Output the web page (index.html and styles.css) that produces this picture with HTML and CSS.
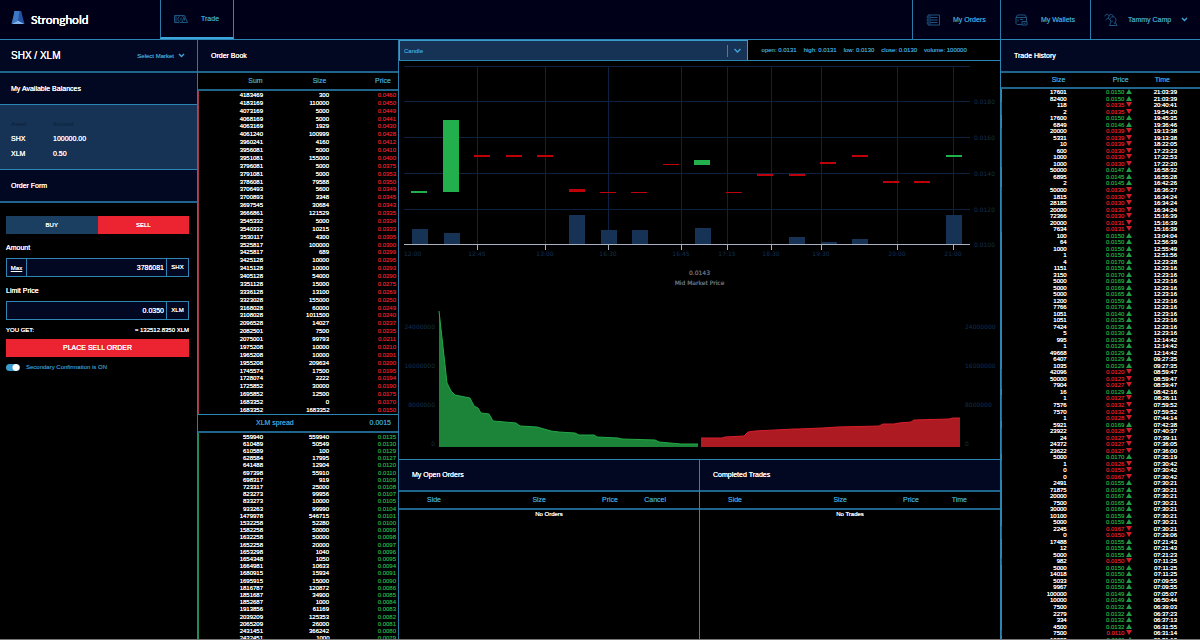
FILE: index.html
```html
<!DOCTYPE html>
<html lang="en">
<head>
    <meta charset="UTF-8">
    <title>Stronghold</title>
    <link rel="stylesheet" href="styles.css">
</head>
<body>

    <!-- top bar -->
    <header class="topbar">
        <a class="logo" href="#">
            <svg width="14" height="14" viewBox="0 0 14 14">
                <path d="M3.600 0h6.400l1.400 9H2.400z" fill="#4a90d8"/>
                <path d="M3.600 0L.5 13 7 9.500 9 0z" fill="#3d78c4"/>
                <path d="M10 0l3.500 13L7 9.500 8.500 0z" fill="#2350a0"/>
                <path d="M.5 13L7 9.500l6.500 3.500z" fill="#7db4f0"/>
            </svg>
            <span>Stronghold</span>
        </a>
        <nav class="nav">
            <a class="nav-link trade active" href="#">
                <svg width="14" height="10" viewBox="0 0 14 10">
                    <path d="M5 1.500H.5v7H5M2 1.500v7M9 2.500A3 3.500 0 1 0 9 7.500M7 3.500v3M10.500 1.500l-2.500 7h5.500zM10.500 4v2.500M5 1.500h5"/>
                </svg>
                <span>Trade</span>
            </a>
            <a class="nav-link orders" href="#">
                <svg width="14" height="12" viewBox="0 0 14 12">
                    <path d="M2 1h11.500v10H2zM.5 3h2M.5 6h2M.5 9h2M4.500 3.500h7M4.500 6h7M4.500 8.500h7M4 1v10"/>
                </svg>
                <span>My Orders</span>
            </a>
            <a class="nav-link wallets" href="#">
                <svg width="13" height="12" viewBox="0 0 13 12">
                    <path d="M1 3.500h10.500v4M1 3.500v6l1 1h5M1 3.500L2.500 1H10l1.500 2.500M3 5.500v2M5 5.500h3M7 7.500h5v3.500H7zM8.500 9.200h2"/>
                </svg>
                <span>My Wallets</span>
            </a>
            <a class="nav-link user" href="#">
                <svg width="14" height="14" viewBox="0 0 14 14">
                    <path d="M1 3.500a2 2 0 1 1 3 1.500L1.500 7M5 3a2 2 0 1 1 4 1M6 6.500a3 3 0 1 1 5 2.500L13 12.500H5.500L7 9zM8 7.500v1.500M10 9.500l1 1.500M4 5l2 2"/>
                </svg>
                <span>Tammy Camp</span>
                <svg class="arrow" width="7" height="5" viewBox="0 0 7 5"><path d="M1 1l2.500 2.500L6 1"/></svg>
            </a>
        </nav>
    </header>

    <main class="layout">

        <!-- left column -->
        <section class="account">
            <div class="title market">
                <h1>SHX / XLM</h1>
                <a class="select-market" href="#">Select Market
                    <svg class="arrow" width="7" height="5" viewBox="0 0 7 5"><path d="M1 1l2.500 2.500L6 1"/></svg>
                </a>
            </div>
            <h2 class="title balances-title">My Available Balances</h2>
            <div class="balances">
                <table>
                    <thead>
                        <tr><th>Asset</th><th>Amount</th></tr>
                    </thead>
                    <tbody>
                        <tr><td>SHX</td><td>100000.00</td></tr>
                        <tr><td>XLM</td><td>0.50</td></tr>
                    </tbody>
                </table>
            </div>
            <h2 class="title">Order Form</h2>
            <form class="order-form" action="#">
                <div class="side">
                    <button type="button" class="buy">BUY</button>
                    <button type="button" class="sell">SELL</button>
                </div>
                <label for="amount">Amount</label>
                <div class="field">
                    <button type="button" class="max">Max</button>
                    <input id="amount" type="text" value="3786081">
                    <span class="unit">SHX</span>
                </div>
                <label for="price">Limit Price</label>
                <div class="field">
                    <input id="price" type="text" value="0.0350">
                    <span class="unit">XLM</span>
                </div>
                <div class="total">
                    <span>YOU GET:</span>
                    <span>≈ 132512.8350 XLM</span>
                </div>
                <button type="submit" class="place">PLACE SELL ORDER</button>
                <div class="confirm">
                    <input id="confirm" type="checkbox" checked>
                    <label for="confirm">Secondary Confirmation is ON</label>
                </div>
            </form>
        </section>

        <!-- order book -->
        <section class="book">
            <h2 class="title">Order Book</h2>
            <table class="head">
                <thead><tr><th>Sum</th><th>Size</th><th>Price</th></tr></thead>
            </table>
            <table class="rows asks"><tbody id="asks"></tbody></table>
            <div class="spread"><span>XLM spread</span><span>0.0015</span></div>
            <table class="rows bids"><tbody id="bids"></tbody></table>
        </section>

        <!-- charts -->
        <section class="center">
            <div class="chart-bar">
                <div class="select-box">
                    <select aria-label="Chart type">
                        <option>Candle</option>
                        <option>Line</option>
                    </select>
                    <span class="bar"></span>
                    <svg class="arrow" width="9" height="6" viewBox="0 0 9 6"><path d="M1.500 1l3 3 3-3"/></svg>
                </div>
                <div class="ohlc">
                    <span>open: 0.0131</span>
                    <span>high: 0.0131</span>
                    <span>low: 0.0130</span>
                    <span>close: 0.0130</span>
                    <span>volume: 100000</span>
                </div>
            </div>
            <svg class="chart" id="candles" viewBox="0 0 601 205"></svg>
            <div class="mid">
                <p>0.0143</p>
                <p>Mid Market Price</p>
            </div>
            <svg class="chart" id="depth" viewBox="0 0 601 170"></svg>

            <div class="history">
                <div class="panel">
                    <h2 class="title">My Open Orders</h2>
                    <table class="head">
                        <thead><tr><th>Side</th><th>Size</th><th>Price</th><th>Cancel</th><th></th></tr></thead>
                    </table>
                    <p class="empty">No Orders</p>
                </div>
                <div class="panel">
                    <h2 class="title">Completed Trades</h2>
                    <table class="head">
                        <thead><tr><th>Side</th><th>Size</th><th>Price</th><th>Time</th><th></th></tr></thead>
                    </table>
                    <p class="empty">No Trades</p>
                </div>
            </div>
        </section>

        <!-- trade history -->
        <section class="trades">
            <h2 class="title">Trade History</h2>
            <table class="head">
                <thead><tr><th>Size</th><th>Price</th><th>Time</th></tr></thead>
            </table>
            <table class="rows"><tbody id="trades"></tbody></table>
        </section>
    </main>

    <script src="script.js"></script>
</body>
</html>
```

FILE: styles.css
```css
/* reset */
body, h1, h2, p, table, form, input, button, select {
    margin: 0;
    padding: 0;
}
* {
    box-sizing: border-box;
}
a {
    color: inherit;
    text-decoration: none;
}
table {
    width: 100%;
    border-collapse: collapse;
    table-layout: fixed;
}
th, td {
    padding: 0;
    font-weight: normal;
}
button, input, select {
    border: 0;
    border-radius: 0;
    outline: none;
    background: none;
    color: inherit;
    font: inherit;
    text-shadow: inherit;
}
h1, h2 {
    font-size: 7px;
    font-weight: normal;
}
body {
    display: flex;
    flex-direction: column;
    height: 100vh;
    overflow: hidden;
    border-bottom: 1px solid #777;
    background-color: #000;
    color: #fff;
    font: 7px/8px "Liberation Sans", Arial, sans-serif;
    text-shadow: 0 0 0 currentColor;
}
.arrow {
    fill: none;
    stroke: #3fa5d8;
    stroke-width: 1.4;
}

/* top bar */
.topbar {
    display: flex;
    flex: none;
    height: 40px;
    border-bottom: 1px solid #2a86b4;
    background-color: #000018;
}
.logo {
    display: flex;
    align-items: center;
    gap: 6px;
    width: 160px;
    padding: 0 0 3px 11px;
    font: 12px/14px Lato, sans-serif;
    text-shadow: 0 0 0 #fff, 0 0 0 #fff;
}
.logo span {
    padding-top: 3px;
}
.nav {
    display: flex;
    flex: 1;
    color: #3a9ccb;
}
.nav-link {
    display: flex;
    align-items: center;
    height: 39px;
    border-left: 1px solid #2a7ba8;
}
.nav-link svg:first-child {
    fill: none;
    stroke: #1c537c;
    stroke-width: 1;
}
.trade {
    width: 74px;
    margin-right: auto;
    padding-left: 13px;
    gap: 13px;
    border-right: 1px solid #2a86b4;
    border-bottom: 2px solid #3ea6dc;
}
.orders {
    width: 88px;
    padding-left: 13px;
    gap: 13px;
}
.wallets {
    width: 90px;
    padding-left: 14px;
    gap: 13px;
}
.user {
    width: 110px;
    padding-left: 13px;
    gap: 10px;
}

/* layout */
.layout {
    display: grid;
    grid-template-columns: 198px 201px 1fr 200px;
    flex: 1;
    min-height: 0;
}
.layout > section {
    min-width: 0;
    overflow: hidden;
}
.title {
    display: flex;
    align-items: center;
    height: 33px;
    padding-left: 11px;
    border-bottom: 2px solid #20658c;
    background-color: #030822;
}
.head {
    height: 18px;
    border-bottom: 2px solid #20658c;
    color: #3a9ccb;
}
.head th {
    padding-right: 5px;
    text-align: right;
}
.rows {
    font-size: 6px;
    line-height: 6px;
    text-align: right;
}
.up {
    color: #1f9e45;
}
.down {
    color: #d01c28;
}

/* account */
.account {
    border-right: 1px solid #2a7ba8;
}
.market {
    justify-content: space-between;
    padding-right: 12px;
}
.market h1 {
    font-size: 10px;
}
.select-market {
    display: flex;
    align-items: center;
    gap: 4px;
    color: #3a9ccb;
    font-size: 6px;
}
.balances-title {
    height: 32px;
    border-bottom: 1px solid #2a86b4;
}
.balances {
    height: 65px;
    padding: 11px;
    border-bottom: 1px solid #2a86b4;
    background-color: #163254;
}
.balances tr {
    height: 15px;
    text-align: left;
}
.balances th {
    height: 13px;
    color: #0b1f38;
    font-size: 6px;
    text-shadow: none;
}
.balances th:first-child {
    width: 42px;
}
.order-form {
    padding: 13px 8px 0 6px;
}
.side {
    display: flex;
    height: 18px;
    font-size: 6px;
}
.side button {
    flex: 1;
    cursor: pointer;
}
.side .buy {
    background-color: #1a3f60;
}
.side .sell, .place {
    background-color: #ec2330;
}
.order-form > label {
    display: block;
    height: 8px;
    margin-top: 10px;
}
.field {
    display: flex;
    height: 19px;
    margin: 6px 0;
    border: 1px solid #2f86b5;
    background-color: #030822;
}
.field input {
    flex: 1;
    min-width: 0;
    padding-right: 2px;
    text-align: right;
}
.field .max {
    width: 20px;
    border-right: 1px solid #2f86b5;
    font-size: 6px;
    text-decoration: underline;
}
.field .unit {
    width: 22px;
    border-left: 1px solid #2f86b5;
    font-size: 6px;
    line-height: 17px;
    text-align: center;
}
.total {
    display: flex;
    justify-content: space-between;
    margin-bottom: 5px;
    font-size: 6px;
}
.place {
    width: 100%;
    height: 18px;
    cursor: pointer;
}
.confirm {
    display: flex;
    align-items: center;
    gap: 6px;
    margin-top: 6px;
    color: #2f86b5;
    font-size: 6px;
}
.confirm input {
    width: 14px;
    height: 7px;
    border-radius: 4px;
    appearance: none;
    background: radial-gradient(circle at 10px 50%, #fff 3px, #3a9ccb 4px);
}

/* order book */
.book {
    border-right: 1px solid #2a7ba8;
}
.book .title {
    padding-left: 13px;
}
.book .head th:first-child {
    padding-right: 2px;
}
.book .head th:last-child {
    padding-right: 7px;
}
.book .rows {
    border-left: 1px solid #a03848;
}
.book td {
    padding-right: 2px;
}
.book .asks {
    height: 323px;
}
.book .bids {
    height: 209px;
    border-left-color: #1f8a60;
}
.spread {
    display: flex;
    align-items: center;
    justify-content: space-between;
    height: 19px;
    padding: 0 7px 0 58px;
    border-top: 1px solid #2a86b4;
    border-bottom: 2px solid #20658c;
    color: #3a9ccb;
}

/* charts */
.center {
    display: flex;
    flex-direction: column;
}
.chart-bar {
    display: flex;
    flex: none;
    height: 21px;
    border-bottom: 1px solid #2a86b4;
    color: #3a9ccb;
    font-size: 6px;
}
.select-box {
    display: flex;
    align-items: center;
    width: 58%;
    padding-right: 5px;
    border: 1px solid #3a9ccb;
    border-bottom: 0;
    background-color: #163254;
}
.select-box select {
    flex: 1;
    padding-left: 4px;
    appearance: none;
}
.select-box .bar {
    width: 1px;
    height: 12px;
    margin-right: 5px;
    background-color: #2f86b5;
}
.ohlc {
    display: flex;
    align-items: center;
    gap: 7px;
    padding-left: 14px;
}
.chart {
    display: block;
    flex: none;
    width: 100%;
    text-shadow: none;
}
.chart text {
    fill: #12304f;
    font: 6px "DejaVu Sans", sans-serif;
}
.grid {
    stroke: #0c2240;
}
.axis {
    stroke: #aab0c0;
}
.volume {
    fill: #163254;
}
.rise {
    fill: #22b04c;
}
.fall {
    fill: #c00008;
}
.bid-area {
    fill: #1c8438;
}
.ask-area {
    fill: #ae1a22;
}
.bid-line {
    fill: none;
    stroke: #22a848;
}
.ask-line {
    fill: none;
    stroke: #d81e2c;
}
.mid {
    height: 23px;
    padding-top: 2px;
    color: #66707c;
    font: 6px/10px "DejaVu Sans", sans-serif;
    text-align: center;
}
.history {
    display: flex;
    flex: 1;
    border-top: 1px solid #2a86b4;
}
.panel {
    flex: 1;
}
.panel:first-child {
    border-right: 1px solid #2a86b4;
}
.panel .title {
    height: 32px;
    padding-left: 13px;
}
.panel th {
    padding: 0;
}
.panel th:nth-child(1) {
    width: 14%;
}
.panel th:nth-child(2) {
    width: 35%;
}
.panel th:nth-child(3) {
    width: 24%;
}
.panel th:nth-child(4) {
    width: 16%;
}
.empty {
    font-size: 6px;
    text-align: center;
}

/* trade history */
.trades {
    border-left: 1px solid #2a86b4;
}
.trades .title {
    padding-left: 13px;
}
.trades .head {
    height: 16px;
}
.trades .head th:first-child {
    padding-right: 2px;
}
.trades .head th:last-child {
    padding-right: 30px;
}
.trades .rows {
    height: 554px;
}
.trades td {
    padding-right: 1px;
}
.trades td:first-child {
    border-left: 1px solid #24909c;
}
.trades .sold td:first-child {
    border-left-color: #a03848;
}
.trades td:last-child {
    padding-right: 23px;
}
.trades td svg {
    display: inline-block;
    width: 6px;
    height: 5px;
    margin-left: 2px;
    fill: currentColor;
}
```

FILE: script.js
```js
/* order book: sum size price */
var asks = '4183469 300 0.0460,4183169 110000 0.0450,4073169 5000 0.0449,4068169 5000 0.0441,4063169 1929 0.0430,' +
    '4061240 100999 0.0428,3960241 4160 0.0412,3956081 5000 0.0410,3951081 155000 0.0400,3796081 5000 0.0375,' +
    '3791081 5000 0.0353,3786081 79588 0.0350,3706493 5600 0.0349,3700893 3348 0.0345,3697545 30684 0.0343,' +
    '3666861 121529 0.0335,3545332 5000 0.0334,3540332 10215 0.0333,3530117 4300 0.0305,3525817 100000 0.0300,' +
    '3425817 689 0.0299,3425128 10000 0.0295,3415128 10000 0.0293,3405128 54000 0.0290,3351128 15000 0.0275,' +
    '3336128 13100 0.0269,3323028 155000 0.0250,3168028 60000 0.0249,3108028 1011500 0.0240,2096528 14027 0.0237,' +
    '2082501 7500 0.0235,2075001 99793 0.0211,1975208 10000 0.0210,1965208 10000 0.0201,1955208 209634 0.0200,' +
    '1745574 17500 0.0195,1728074 2222 0.0194,1725852 30000 0.0190,1695852 12500 0.0175,1683352 0 0.0170,' +
    '1683352 1683352 0.0150';
var bids = '559940 559940 0.0135,610489 50549 0.0130,610589 100 0.0129,628584 17995 0.0127,641488 12904 0.0120,' +
    '697398 55910 0.0110,698317 919 0.0109,723317 25000 0.0108,823273 99956 0.0107,833273 10000 0.0105,' +
    '933263 99990 0.0104,1479978 546715 0.0101,1532258 52280 0.0100,1582258 50000 0.0099,1632258 50000 0.0098,' +
    '1652258 20000 0.0097,1653298 1040 0.0096,1654348 1050 0.0095,1664981 10633 0.0094,1680915 15934 0.0091,' +
    '1695915 15000 0.0090,1816787 120872 0.0086,1851687 34900 0.0085,1852687 1000 0.0084,1913856 61169 0.0083,' +
    '2039209 125353 0.0082,2065209 26000 0.0081,2431451 366242 0.0080,2432451 1000 0.0079';

/* trades: size price direction time */
var trades = '17601 0.0150 + 21:03:39,82400 0.0150 + 21:03:39,118 0.0135 - 20:40:41,2 0.0135 - 19:54:20,' +
    '17600 0.0150 + 19:45:35,6849 0.0146 + 19:36:46,20000 0.0139 - 19:13:38,5331 0.0139 - 19:13:38,' +
    '10 0.0139 - 18:22:05,600 0.0130 - 17:23:23,1000 0.0130 - 17:22:53,1000 0.0130 - 17:22:20,' +
    '50000 0.0147 + 16:58:32,6895 0.0145 + 16:55:28,2 0.0145 + 16:42:26,50000 0.0130 - 16:36:27,' +
    '1815 0.0130 - 16:34:24,28185 0.0130 - 16:34:24,20000 0.0130 - 16:34:24,72366 0.0130 - 15:16:39,' +
    '20000 0.0131 - 15:16:39,7634 0.0131 - 15:16:39,100 0.0150 + 13:04:04,64 0.0150 + 12:56:39,' +
    '1000 0.0150 + 12:55:49,1 0.0150 + 12:51:56,4 0.0170 + 12:23:28,1151 0.0150 + 12:23:16,' +
    '3150 0.0170 + 12:23:16,5000 0.0169 + 12:23:16,5000 0.0169 + 12:23:16,5000 0.0165 + 12:23:16,' +
    '1200 0.0159 + 12:23:16,7766 0.0170 + 12:23:16,1051 0.0140 + 12:23:16,1051 0.0135 + 12:23:16,' +
    '7424 0.0135 + 12:23:16,5 0.0130 + 12:23:16,995 0.0130 + 12:14:42,1 0.0129 + 12:14:42,' +
    '49668 0.0129 + 12:14:42,6407 0.0129 + 09:27:35,1035 0.0129 + 09:27:35,42096 0.0120 - 08:59:47,' +
    '50000 0.0123 - 08:59:47,7904 0.0127 - 08:59:47,16 0.0129 + 08:42:16,1 0.0127 - 08:26:11,' +
    '7576 0.0132 - 07:59:52,7570 0.0132 - 07:59:52,1 0.0128 - 07:44:14,5921 0.0169 + 07:42:38,' +
    '23922 0.0128 - 07:40:37,24 0.0127 - 07:39:11,24372 0.0127 - 07:36:05,23622 0.0127 - 07:36:00,' +
    '5000 0.0170 + 07:35:19,1 0.0126 - 07:30:42,0 0.0150 - 07:30:42,0 0.0167 - 07:30:42,' +
    '2491 0.0155 + 07:30:21,71875 0.0167 + 07:30:21,20000 0.0167 + 07:30:21,7500 0.0165 + 07:30:21,' +
    '30000 0.0160 + 07:30:21,10100 0.0159 + 07:30:21,5000 0.0159 + 07:30:21,2245 0.0167 - 07:30:21,' +
    '0 0.0150 - 07:29:06,17488 0.0155 + 07:21:43,12 0.0155 + 07:21:43,5000 0.0155 + 07:21:23,' +
    '982 0.0150 - 07:11:25,5000 0.0150 + 07:11:25,14018 0.0150 + 07:11:25,5033 0.0150 + 07:09:55,' +
    '9967 0.0150 + 07:09:55,100000 0.0149 + 07:05:07,10000 0.0149 + 06:50:44,7500 0.0132 + 06:39:03,' +
    '2279 0.0132 + 06:37:23,334 0.0132 + 06:37:13,4500 0.0132 + 06:31:55,7500 0.0110 - 06:31:14,' +
    '10000 0.0131 + 06:31:10';

function bookRows(data, cls) {
    return data.split(',').map(function (row) {
        var c = row.split(' ');
        return '<tr><td>' + c[0] + '</td><td>' + c[1] + '</td><td class="' + cls + '">' + c[2] + '</td></tr>';
    }).join('');
}

document.getElementById('asks').innerHTML = bookRows(asks, 'down');
document.getElementById('bids').innerHTML = bookRows(bids, 'up');
document.getElementById('trades').innerHTML = trades.split(',').map(function (row) {
    var c = row.split(' '),
        up = c[2] === '+';
    return '<tr class="' + (up ? 'bought' : 'sold') + '"><td>' + c[0] + '</td>' +
        '<td class="' + (up ? 'up' : 'down') + '">' + c[1] +
        '<svg viewBox="0 0 6 5"><path d="' + (up ? 'M0 5h6L3 0z' : 'M0 0h6L3 5z') + '"/></svg></td>' +
        '<td>' + c[3] + '</td></tr>';
}).join('');

/* candle chart */
function rect(cls, x, y, w, h) {
    return '<rect class="' + cls + '" x="' + x + '" y="' + y + '" width="' + w + '" height="' + h + '"/>';
}
function line(cls, x1, y1, x2, y2) {
    return '<line class="' + cls + '" x1="' + x1 + '" y1="' + y1 + '" x2="' + x2 + '" y2="' + y2 + '"/>';
}
function text(x, y, anchor, str) {
    return '<text x="' + x + '" y="' + y + '" text-anchor="' + anchor + '">' + str + '</text>';
}

var ticks = [[78, '12:45'], [146, '13:00'], [209, '16:30'], [282, '16:45'], [328, '17:15'],
        [372, '18:30'], [422, '19:30'], [498, '20:00'], [554, '21:00']],
    levels = [[5, ''], [40, '0.0180'], [76, '0.0160'], [112, '0.0140'], [148, '0.0120'], [183, '0.0100']],
    /* x, top, height, rising */
    candles = [[12, 130, 2, 1], [44, 59, 72, 1], [75, 94, 2, 0], [107, 94, 2, 0], [138, 94, 2, 0],
        [170, 128, 3, 0], [201, 131, 1, 0], [232, 131, 1, 0], [264, 103, 1, 0], [295, 99, 5, 1],
        [327, 131, 1, 0], [358, 113, 2, 0], [390, 113, 2, 0], [421, 101, 2, 0], [453, 94, 2, 0],
        [484, 120, 2, 0], [515, 120, 2, 0], [547, 94, 2, 1]],
    volumes = [[13, 15], [45, 11], [170, 29], [202, 14], [233, 14], [296, 16], [390, 7], [422, 2], [453, 5], [547, 29]],
    out = '';

levels.forEach(function (l, i) {
    if (i < 5) {
        out += line('grid', 5, l[0] + 0.5, 571, l[0] + 0.5);
    }
    out += text(575, l[0] + 3, 'start', l[1]);
});
ticks.forEach(function (t) {
    out += line('grid', t[0] + 0.5, 5, t[0] + 0.5, 183);
});
volumes.forEach(function (v) {
    out += rect('volume', v[0], 183 - v[1], 16, v[1]);
});
candles.forEach(function (c) {
    out += rect(c[3] ? 'rise' : 'fall', c[0], c[1], 16, c[2]);
});
out += line('axis', 5, 183.5, 571, 183.5) + text(5, 195, 'start', '12:00');
ticks.forEach(function (t) {
    out += line('axis', t[0] + 0.5, 184, t[0] + 0.5, 189) + text(t[0], 195, 'middle', t[1]);
});
document.getElementById('candles').innerHTML = out;

/* depth chart */
var bidLine = '40,22 48,94 52,102 56,106 71,109 75,117 79,119 82,124 90,125 94,132 117,134 121,137 138,138 152,142 ' +
        '160,143 176,144 180,146 195,146 198,148 219,149 223,150 256,151 260,153 282,155 299,155',
    askLine = '302,149 323,149 326,148 345,147 349,143 356,142 395,140 399,140 423,139 439,138 480,137 484,135 ' +
        '495,135 500,134 512,133 515,131 550,130 554,129 561,129';

out = '<polygon class="bid-area" points="40,158 ' + bidLine + ' 299,158"/>' +
    '<polyline class="bid-line" points="' + bidLine + '"/>' +
    '<polygon class="ask-area" points="302,158 ' + askLine + ' 561,158"/>' +
    '<polyline class="ask-line" points="' + askLine + '"/>';
[[40, '24000000'], [79, '16000000'], [118, '8000000'], [157, '0']].forEach(function (l) {
    out += text(36, l[0], 'end', l[1]) + text(566, l[0], 'start', l[1]);
});
document.getElementById('depth').innerHTML = out;
```
